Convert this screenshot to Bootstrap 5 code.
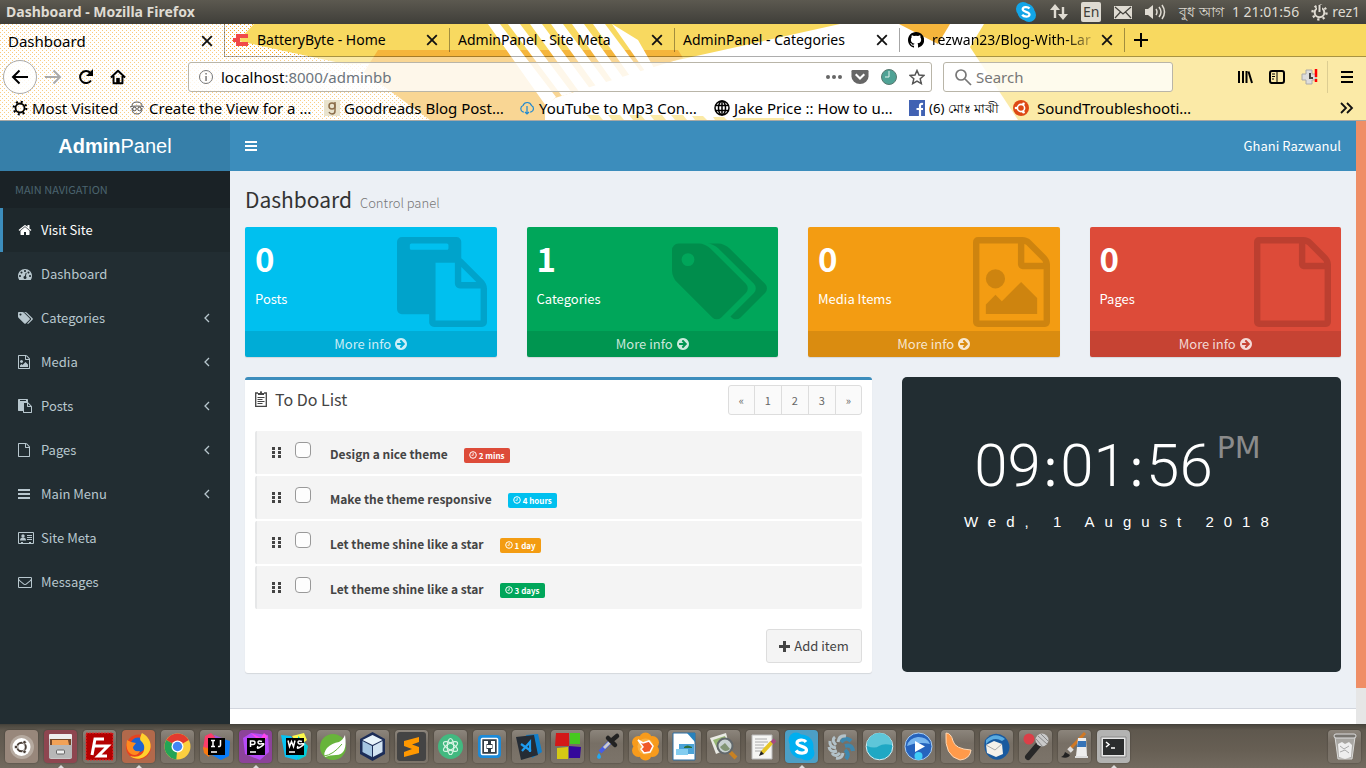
<!DOCTYPE html>
<html lang="en">
<head>
<meta charset="utf-8">
<meta name="viewport" content="width=device-width, initial-scale=1">
<title>Dashboard</title>
<link href="https://cdn.jsdelivr.net/npm/bootstrap@5.3.0/dist/css/bootstrap.min.css" rel="stylesheet">
<style>
:root{--ui:"Noto Sans","Open Sans",sans-serif;--page:"Noto Sans CJK SC","Noto Sans",sans-serif}
body{min-height:100vh;font-family:var(--ui);font-size:14px;line-height:20px;color:#000;background:#fff}
a{color:inherit;text-decoration:none}
button{font:inherit;color:inherit;background:none;border:0;padding:0}
svg{display:block;flex:none}
.ic{width:14px;height:14px;fill:currentColor}
.ic-12{width:12px}.ic-15{width:15px}.ic-16{width:16px}
.ic-grip{width:10px;height:11px}
/* desktop top panel */
.panel{height:24px;background:linear-gradient(#5c5950,#3f3e39);color:#dfdbd2;padding:0 6px}
.panel-title{font-weight:700;font-size:14px}
.tray{gap:13px}
.lang{background:#dfdbd2;color:#3f3e39;border-radius:2px;width:20px;height:20px;text-align:center;line-height:20px}
/* browser chrome */
.chrome{position:relative;height:97px;background:#fff;border-bottom:1px solid #a8a8a4}
.chrome-art{position:absolute;left:0;top:0;width:100%;height:100%}
.chrome-in{position:relative}
.tabs-row{height:33px}
.tab-item{flex:0 1 225px;min-width:0;height:33px;padding:0 11px 0 0;border-bottom:1px solid rgba(0,0,0,.32)}
.tab-item+.tab-item:not(.tab-second)::before{content:"";width:1px;height:24px;background:rgba(0,0,0,.35);flex:none}
.tab-second{border-left:1px solid rgba(0,0,0,.35)}
.tab-active{background:rgba(255,255,255,.4);border-bottom:0;flex-basis:224px;font-size:15px}
.tab-fade{-webkit-mask-image:linear-gradient(90deg,#000 84%,rgba(0,0,0,.25));mask-image:linear-gradient(90deg,#000 84%,rgba(0,0,0,.25))}
.tab-fill{border-bottom:1px solid rgba(0,0,0,.32)}
.tab-fill::before{content:"";width:1px;height:24px;background:rgba(0,0,0,.35)}
.tool-row{height:39px;background:rgba(255,255,255,.45);display:grid;grid-template-columns:188px minmax(0,1fr) 230px 193px;align-items:center}
.book-row{height:24px;background:rgba(255,255,255,.45);font-size:15px}
.nav-area{padding-left:3px}
.back-btn{width:34px;height:34px;border:1px solid #aaa;border-radius:50%;background:rgba(255,255,255,.85);display:grid;place-items:center}
.field-box{height:30px;border:1px solid #b9b5a8;border-radius:3px;background:rgba(255,255,255,.8);padding:0 6px}
.field-box input{border:0;background:none;outline:0;min-width:0;padding:0;flex:1;font-size:15px;color:#777}
.field-box input::placeholder{color:#777;opacity:1}
.url-box{margin-right:11px;font-size:15px}
.url-text{flex:1;min-width:0}
.tool-right{padding-right:12px}
.tool-rule{width:1px;height:32px;background:rgba(0,0,0,.12)}
.bm{flex:0 1 195px;white-space:nowrap}
.bm-first{flex-basis:125px}.bm-short{flex-basis:104px}
/* admin page */
.admin{font-family:var(--page);font-size:12px;flex:1 0 auto;background:#ecf0f5;color:#333}
.side{flex:0 0 230px;background:#222d32;color:#b8c7ce;font-size:13px}
.brand{height:50px;background:#367fa9;color:#fff;font:20px/50px "Liberation Sans",Arial,sans-serif;text-align:center;display:block}
.side-head{height:37px;line-height:37px;padding-left:15px;background:#1a2226;color:#4b646f;font-size:11px}
.side-link{height:44px;padding:0 20px 0 15px;border-left:3px solid transparent}
.side-link .ico-slot{width:23px}
.side-link.current{color:#fff;background:#1e282c;border-left-color:#3c8dbc}
.topnav{height:50px;background:#3c8dbc;color:#fff;padding:0 15px;font-size:13px}
.page-body{padding:14px 15px 35px}
.page-head{height:42px}
.page-head h1{font-size:21px;line-height:28px;font-weight:400;margin:0;color:#333}
.page-head small{font-size:13px;font-weight:300;color:#777}
.grid-row{--bs-gutter-x:30px}
.stat{position:relative;border-radius:2px;color:#fff;height:130px;box-shadow:0 1px 1px rgba(0,0,0,.1);margin-bottom:20px;overflow:hidden}
.stat-num{font-size:33px;line-height:42px;font-weight:700;padding:10px 10px 0}
.stat-name{font-size:13px;line-height:20px;padding:10px 10px 0}
.stat-pic{position:absolute;right:10px;top:10px;height:90px;fill:rgba(0,0,0,.15)}
.stat-more{position:absolute;left:0;right:0;bottom:0;height:26px;background:rgba(0,0,0,.1);color:rgba(255,255,255,.8);font-size:13px}
.bg-aqua{background:#00c0ef}.bg-leaf{background:#00a65a}.bg-amber{background:#f39c12}.bg-brick{background:#dd4b39}
.todo{background:#fff;border-top:3px solid #3c8dbc;border-radius:3px;box-shadow:0 1px 1px rgba(0,0,0,.1);padding:5px 10px 10px;color:#444}
.todo-head h2{font-size:16px;line-height:28px;font-weight:400;margin:0 0 2px;color:#444}
.todo .pagination{--bs-pagination-border-radius:3px}
.todo .page-link{width:28px;height:30px;padding:0;font-size:11px;line-height:28px;text-align:center;color:#666;background:#fafafa;border-color:#ddd}
.todo .page-item:first-child .page-link,.todo .page-item:last-child .page-link{width:27px}
.todo-list{margin:16px 0 20px;display:grid;gap:2px}
.todo-list li{height:43px;background:#f4f4f4;border-left:2px solid #e6e7e8;border-radius:2px;padding:0 10px 0 15px;color:#444}
.todo-list .form-check-input{width:16px;height:16px;margin:-6px 0 0 13px;border:1px solid #999;border-radius:4px;background:#fdfdfd;flex:none}
.todo-list label{font-weight:700;margin:2px 0 0 19px}
.due{font-size:8px;line-height:15px;height:15px;font-weight:700;color:#fff;border-radius:2px;padding:0 5px;margin:5px 0 0 16px;gap:2px}
.add-btn{height:34px;padding:0 12px;background:#f4f4f4;border:1px solid #ddd;border-radius:3px;color:#444;font-size:13px}
.clock{height:295px;border-radius:5px;background:#222d32;color:#fff;padding-top:53px;text-align:center}
.clock-time{font:300 60px/72px Roboto,"Liberation Sans",sans-serif;padding-right:8px}
.clock-time b{font:400 50px/60px "Noto Sans",sans-serif;margin:0 3px}
.clock-time span{font:30px/36px "DejaVu Sans",sans-serif;color:#8b8b8b;margin-left:4px;align-self:flex-start}
.clock-date{font:15px/20px "Liberation Sans",Arial,sans-serif;letter-spacing:10px;margin-top:10px}
.foot{height:16px;background:#fff;border-top:1px solid #d2d6de}
.scroll{flex:0 0 10px;background:#e6e6e6}
.scroll i{display:block;height:94%;background:#ef8e66}
/* launcher */
.dock{height:44px;padding:0 5px;background:linear-gradient(#4a463e,#5f584e 12%,#675f54 60%,#726a5f);gap:6px;border-top:1px solid #45423b}
.dock button{position:relative;width:33px;height:33px;border-radius:4px;background:linear-gradient(#8c857c,#776f65 40%,#7c746a);box-shadow:0 0 1px 1px rgba(0,0,0,.12);display:grid;place-items:center}
.dock svg{width:29px;height:29px}
.dock .on::after{content:"";position:absolute;bottom:-5px;left:14px;border:3px solid transparent;border-top:0;border-bottom-color:#ddd}
.dock .dk-r{background:#8e4650}.dock .dk-o{background:#b2694b}.dock .dk-p{background:#8c4399}.dock .dk-b{background:#4c9fc6}.dock .dk-g{background:#b3b3b2}.dock .dk-u{background:#98877b}
</style>
</head>
<body class="d-flex flex-column">
<svg width="0" height="0" class="position-absolute" aria-hidden="true"><defs>
<symbol id="home" viewBox="0 0 1792 1792"><path d="M1472 992v480q0 26-19 45t-45 19h-384v-384h-256v384h-384q-26 0-45-19t-19-45v-480q0-1 .5-3t.5-3l575-474 575 474q1 2 1 6zm223-69l-62 74q-8 9-21 11h-3q-13 0-21-7l-692-577-692 577q-12 8-24 7-13-2-21-11l-62-74q-8-10-7-23.5t11-21.5l719-599q32-26 76-26t76 26l244 204v-195q0-14 9-23t23-9h192q14 0 23 9t9 23v408l219 182q10 8 11 21.5t-7 23.5z"/></symbol>
<symbol id="dash" viewBox="0 0 1792 1792"><path d="M384 1152q0-53-37.5-90.5t-90.5-37.5-90.5 37.5-37.5 90.5 37.5 90.5 90.5 37.5 90.5-37.5 37.5-90.5zm192-448q0-53-37.5-90.5t-90.5-37.5-90.5 37.5-37.5 90.5 37.5 90.5 90.5 37.5 90.5-37.5 37.5-90.5zm428 481l101-382q6-26-7.5-48.5t-38.5-29.5-48 6.500-30 39.500l-101 382q-60 5-107 43.500t-63 98.500q-20 77 20 146t117 89 146-20 89-117q16-60-6-117t-72-91zm660-33q0-53-37.5-90.5t-90.5-37.5-90.5 37.5-37.5 90.5 37.5 90.5 90.5 37.5 90.5-37.5 37.5-90.5zm-640-640q0-53-37.5-90.5t-90.5-37.5-90.5 37.5-37.5 90.5 37.5 90.5 90.5 37.5 90.5-37.5 37.5-90.5zm448 192q0-53-37.5-90.5t-90.5-37.5-90.5 37.5-37.5 90.5 37.5 90.5 90.5 37.5 90.5-37.5 37.5-90.5zm320 448q0 261-141 483-19 29-54 29h-1402q-35 0-54-29-141-221-141-483 0-182 71-348t191-286 286-191 348-71 348 71 286 191 191 286 71 348z"/></symbol>
<symbol id="tags" viewBox="0 0 1920 1792"><path d="M448 448q0-53-37.5-90.5t-90.5-37.5-90.5 37.5-37.5 90.5 37.5 90.5 90.5 37.5 90.5-37.5 37.5-90.5zm1067 576q0 53-37 90l-491 492q-39 37-91 37-53 0-90-37l-715-716q-38-37-64.5-101t-26.5-117v-416q0-52 38-90t90-38h416q53 0 117 26.5t102 64.5l715 714q37 39 37 91zm384 0q0 53-37 90l-491 492q-39 37-91 37-36 0-59-14t-53-45l470-470q37-37 37-90 0-52-37-91l-715-714q-38-38-102-64.5t-117-26.5h224q53 0 117 26.5t102 64.5l715 714q37 39 37 91z"/></symbol>
<symbol id="file" viewBox="128 0 1536 1792"><path d="M1596 380q28 28 48 76t20 88v1152q0 40-28 68t-68 28h-1344q-40 0-68-28t-28-68v-1600q0-40 28-68t68-28h896q40 0 88 20t76 48zm-444-244v376h376q-10-29-22-41l-313-313q-12-12-41-22zm384 1528v-1024h-416q-40 0-68-28t-28-68v-416h-768v1536h1280z"/></symbol>
<symbol id="image" viewBox="128 0 1536 1792"><path d="M1596 380q28 28 48 76t20 88v1152q0 40-28 68t-68 28h-1344q-40 0-68-28t-28-68v-1600q0-40 28-68t68-28h896q40 0 88 20t76 48zm-444-244v376h376q-10-29-22-41l-313-313q-12-12-41-22zm384 1528v-1024h-416q-40 0-68-28t-28-68v-416h-768v1536h1280zm-128-448v320h-1024v-192l192-192 128 128 384-384zm-832-192q-80 0-136-56t-56-136 56-136 136-56 136 56 56 136-56 136-136 56z"/></symbol>
<symbol id="paste" viewBox="0 0 1792 1792"><path d="M768 1664h896v-640h-416q-40 0-68-28t-28-68v-416h-384v1152zm256-1440v-64q0-13-9.5-22.5t-22.5-9.5h-704q-13 0-22.5 9.5t-9.5 22.5v64q0 13 9.5 22.5t22.5 9.5h704q13 0 22.5-9.5t9.5-22.5zm256 672h299l-299-299v299zm512 128v672q0 40-28 68t-68 28h-960q-40 0-68-28t-28-68v-160h-544q-40 0-68-28t-28-68v-1344q0-40 28-68t68-28h1088q40 0 68 28t28 68v328q21 13 36 28l408 408q28 28 48 76t20 88z"/></symbol>
<symbol id="bars" viewBox="0 0 12 12"><path d="M0 1h12v2H0zM0 5h12v2H0zM0 9h12v2H0z"/></symbol>
<symbol id="idcard" viewBox="0 0 16 12"><path fill-rule="evenodd" d="M1 0h14q1 0 1 1v10q0 1-1 1H1q-1 0-1-1V1q0-1 1-1zM1 1v10h2v-1h2v1h6v-1h2v1h2V1z"/><circle cx="5" cy="4" r="1.7"/><path d="M2 8.600q0-3.200 3-3.200t3 3.200zM9 3h5v1H9zM9 5h5v1H9zM9 7h5v1H9z"/></symbol>
<symbol id="mail" viewBox="0 0 1792 1792"><path d="M1664 1504v-768q-32 36-69 66-268 206-426 338-51 43-83 67t-86.500 48.500-102.500 24.500h-2q-48 0-102.500-24.500t-86.500-48.500-83-67q-158-132-426-338-37-30-69-66v768q0 13 9.500 22.500t22.500 9.500h1472q13 0 22.500-9.500t9.500-22.500zm0-1051v-24.500l-.5-13-3-12.500-5.500-9-9-7.500-14-2.500h-1472q-13 0-22.500 9.500t-9.500 22.500q0 168 147 284 193 152 401 317 6 5 35 29.500t46 37.500 44.500 31.500 50.500 27.500 43 9h2q20 0 43-9t50.500-27.500 44.500-31.500 46-37.500 35-29.500q208-165 401-317 54-43 100.500-115.500t46.500-131.500zm128-37v1088q0 66-47 113t-113 47h-1472q-66 0-113-47t-47-113v-1088q0-66 47-113t113-47h1472q66 0 113 47t47 113z"/></symbol>
<symbol id="go" viewBox="128 128 1536 1536"><path d="M1413 896q0-27-18-45l-91-91-362-362q-18-18-45-18t-45 18l-91 91q-18 18-18 45t18 45l189 189h-502q-26 0-45 19t-19 45v128q0 26 19 45t45 19h502l-189 189q-19 19-19 45t19 45l91 91q18 18 45 18t45-18l362-362 91-91q18-18 18-45zm251 0q0 209-103 385.500t-279.500 279.500-385.500 103-385.500-103-279.500-279.500-103-385.500 103-385.500 279.500-279.500 385.500-103 385.500 103 279.500 279.500 103 385.500z"/></symbol>
<symbol id="left" viewBox="0 0 6 10"><path d="M5 1L1 5l4 4" fill="none" stroke="currentColor" stroke-width="1.300"/></symbol>
<symbol id="grip" viewBox="0 0 10 11"><path d="M0 0h3v3H0zM6 0h3v3H6zM0 4h3v3H0zM6 4h3v3H6zM0 8h3v3H0zM6 8h3v3H6z"/></symbol>
<symbol id="time" viewBox="0 0 8 8"><circle cx="4" cy="4" r="3.300" fill="none" stroke="currentColor"/><path d="M4.200 2v2.300H2.500" fill="none" stroke="currentColor" stroke-width=".8"/></symbol>
<symbol id="x" viewBox="0 0 10 10"><path d="M1 1l8 8M9 1L1 9" stroke="#111" stroke-width="1.500"/></symbol>
</defs></svg>

<header class="panel d-flex align-items-center">
  <span class="panel-title me-auto">Dashboard - Mozilla Firefox</span>
  <div class="tray d-flex align-items-center">
    <svg width="22" height="22" viewBox="0 0 22 22"><circle cx="8" cy="8" r="7" fill="#12a5e8"/><circle cx="14" cy="14" r="7" fill="#12a5e8"/><circle cx="11" cy="11" r="8.500" fill="#12a5e8"/><path d="M14.500 7.500C13 5.500 7.700 5.500 7.700 8.300S14.500 10.500 14.500 13.500 8.800 16 7.200 13.800" fill="none" stroke="#fff" stroke-width="2.300"/></svg>
    <svg width="18" height="18" viewBox="0 0 18 18" fill="#dfdbd2"><path d="M5 1l5 6H6.200v8H3.800V7H0zM13 17l-5-6h3.800V4h2.400v7H18z"/></svg>
    <span class="lang">En</span>
    <svg width="18" height="13" viewBox="0 0 18 13"><path fill="#dfdbd2" d="M0 0h18v13H0z"/><path d="M1 1l8 7 8-7M1 12l5.500-6M17 12l-5.500-6" fill="none" stroke="#44423c" stroke-width="1.200"/></svg>
    <svg width="21" height="16" viewBox="0 0 21 16"><path fill="#dfdbd2" d="M0 5h3l5-4v14l-5-4H0z"/><path d="M11 5q2 3 0 6M14 3q4 5 0 10M17 1q5 7 0 14" fill="none" stroke="#dfdbd2" stroke-width="1.500"/></svg>
    <div class="d-flex align-items-center">
      <span class="me-2" lang="bn">বুধ আগ</span><span class="me-2">1 21:01:56</span>
      <svg class="mx-1" width="17" height="17" viewBox="0 0 17 17"><circle cx="8.500" cy="8.500" r="4.800" fill="none" stroke="#dfdbd2" stroke-width="2"/><circle cx="8.500" cy="8.500" r="7" fill="none" stroke="#dfdbd2" stroke-width="2.400" stroke-dasharray="2.200 3.298"/><path d="M8.500 1v7" stroke="#45433d" stroke-width="5"/><path d="M8.500 1v7" stroke="#dfdbd2" stroke-width="2"/></svg>
      <span>rez1</span>
    </div>
  </div>
</header>

<section class="chrome">
  <svg class="chrome-art" viewBox="0 24 1366 96" preserveAspectRatio="none" aria-hidden="true">
    <defs><pattern id="dots" width="4" height="4" patternUnits="userSpaceOnUse"><path d="M0 0h1v1H0zM2 2h1v1H2z" fill="#f5a623"/></pattern></defs>
    <path fill="#fff" d="M0 24h1366v96H0z"/>
    <path fill="url(#dots)" d="M0 24h260L250 42l130 26 50 52H0z"/>
    <path fill="#f8d960" d="M254 24h586L660 64H345L238 41z"/>
    <path fill="#f5b53c" d="M378 50h300l5 8-13 4-115 36-10 8v14H430L364 72z"/>
    <path fill="#fff" d="M488 24h12l56 73-10 9zM508 24h12l52 69-10 3zM530 24h12l49 66-11 3zM551 24h12l46 62-11 3zM572 24h12l43 59-11 3zM593 24h12l42 56-12 3zM612 24l26 16 16 28-9 3zM646 70l30-9 5 3-110 34z"/>
    <g fill="#f8d960"><path d="M587 115h12l4 5h-12zM608 115h12l4 5h-12zM629 115h12l4 5h-12zM650 115h12l4 5h-12zM671 115h12l4 5h-12zM692 116h11l4 4h-12zM713 117h11l3 3h-12zM734 118h50v2h-49z"/></g>
    <path fill="#f5b53c" d="M899 24h51l-12 20z"/>
    <path fill="#f8d960" d="M984 24h382v96h-348l-48-73z"/>
  </svg>
  <div class="chrome-in">
    <nav class="tabs-row d-flex">
      <div class="tab-item tab-active d-flex align-items-center"><span class="ms-2 me-auto">Dashboard</span><button aria-label="Close"><svg width="12" height="12"><use href="#x"/></svg></button></div>
      <div class="tab-item tab-second d-flex align-items-center"><svg class="ms-2 me-2" width="16" height="14" viewBox="0 0 16 14"><path fill="#f04a4a" d="M3 1h12v4H7v4h8v4H3v-4H0V5h3z"/></svg><span class="me-auto">BatteryByte - Home</span><button aria-label="Close"><svg width="12" height="12"><use href="#x"/></svg></button></div>
      <div class="tab-item d-flex align-items-center"><span class="ms-2 me-auto">AdminPanel - Site Meta</span><button aria-label="Close"><svg width="12" height="12"><use href="#x"/></svg></button></div>
      <div class="tab-item d-flex align-items-center"><span class="ms-2 me-auto">AdminPanel - Categories</span><button aria-label="Close"><svg width="12" height="12"><use href="#x"/></svg></button></div>
      <div class="tab-item d-flex align-items-center"><svg class="ms-2" width="16" height="16" viewBox="0 0 16 16"><path d="M8 0C3.580 0 0 3.580 0 8c0 3.540 2.290 6.530 5.470 7.590.4.070.55-.17.55-.38v-1.500c-2.200.5-2.700-.9-2.700-.9-.4-.9-.9-1.200-.9-1.200-.7-.5.1-.5.1-.5.8.1 1.200.8 1.200.8.7 1.200 1.900.9 2.300.7.1-.5.3-.9.5-1.100-1.800-.2-3.600-.9-3.600-4 0-.9.300-1.600.8-2.200-.1-.2-.4-1 .1-2.100 0 0 .7-.2 2.200.8a7.600 7.600 0 014 0c1.500-1 2.200-.8 2.200-.8.4 1.100.2 1.900.1 2.100.5.6.8 1.300.8 2.200 0 3.100-1.900 3.700-3.700 4 .3.300.6.700.6 1.500v2.200c0 .2.100.5.600.4A8 8 0 008 0z"/></svg><span class="tab-fade ms-1 ps-1 me-auto text-nowrap">rezwan23/Blog-With-Lar</span><button aria-label="Close"><svg width="12" height="12"><use href="#x"/></svg></button></div>
      <div class="tab-fill flex-fill d-flex align-items-center"><button class="ms-2" aria-label="New tab"><svg width="16" height="16"><path d="M8 1v14M1 8h14" stroke="#000" stroke-width="2"/></svg></button></div>
    </nav>
    <div class="tool-row">
      <div class="nav-area d-flex align-items-center">
        <button class="back-btn" aria-label="Back"><svg width="18" height="16"><path d="M17 8H2M8.500 1.500L2 8l6.500 6.500" fill="none" stroke="#000" stroke-width="2"/></svg></button>
        <button class="ms-2" aria-label="Forward"><svg width="17" height="16"><path d="M0 8h15M8.500 1.500L15 8l-6.500 6.500" fill="none" stroke="#aaa" stroke-width="2"/></svg></button>
        <button class="ms-3" aria-label="Reload"><svg width="16" height="16"><path d="M13 11.500A6 6 0 1 1 12.500 4" fill="none" stroke="#000" stroke-width="2"/><path d="M15 0v7H8z"/></svg></button>
        <button class="ms-3" aria-label="Home"><svg width="16" height="16" viewBox="0 0 18 16"><path fill="none" stroke="#000" stroke-width="2.200" stroke-linejoin="round" d="M1 8.500L9 1l8 7.500M4 7v8h10V7"/><path d="M7 15V9h4v6z"/></svg></button>
      </div>
      <div class="field-box url-box d-flex align-items-center">
        <svg class="ms-1" width="14" height="14" viewBox="1 1 14 14"><circle cx="8" cy="8" r="6.500" fill="none" stroke="#777"/><path d="M7.300 7h1.500v5H7.300zM7.300 4h1.500v1.500H7.300z" fill="#777"/></svg>
        <div class="url-text ms-2 text-secondary"><a href="#"><span class="text-black">localhost</span>:8000/adminbb</a></div>
        <svg width="18" height="16" fill="#666"><circle cx="3" cy="8" r="2"/><circle cx="9" cy="8" r="2"/><circle cx="15" cy="8" r="2"/></svg>
        <svg class="ms-2 me-2" width="18" height="16" viewBox="0 0 16 15"><path fill="#666" d="M1 1h14q1 0 1 1v5a8 7 0 0 1-16 0V2q0-1 1-1z"/><path d="M4 5l4 4 4-4" fill="none" stroke="#fff" stroke-width="2"/></svg>
        <svg class="mx-1" width="16" height="16"><circle cx="8" cy="8" r="7.500" fill="#4fa295" stroke="#58786f"/><path d="M8 2v6H4" fill="none" stroke="#e6f3ee"/></svg>
        <svg class="ms-2" width="16" height="16"><path d="M8 1.500l2 4.500 5 .5-3.800 3.300 1.100 4.800L8 12.100l-4.300 2.500 1.100-4.800L1 6.500 6 6z" fill="none" stroke="#555" stroke-width="1.500"/></svg>
      </div>
      <div class="field-box d-flex align-items-center">
        <svg class="ms-1" width="18" height="18"><circle cx="7" cy="7" r="5" fill="none" stroke="#777" stroke-width="1.700"/><path d="M11 11l6 6" stroke="#777" stroke-width="1.700"/></svg>
        <input class="ms-1" type="search" aria-label="Search" placeholder="Search">
      </div>
      <div class="tool-right d-flex align-items-center justify-content-end">
        <button aria-label="Library"><svg width="16" height="16"><path d="M2 2v12M6 2v12M9.500 2v12M11.500 2.500L15 14" stroke="#000" stroke-width="2" fill="none"/></svg></button>
        <button class="ms-3" aria-label="Sidebar"><svg width="16" height="16"><rect x="1" y="2" width="14" height="12" rx="2" fill="none" stroke="#000" stroke-width="2"/><path d="M8 2v12M3 5h3M3 7.500h3M3 10h2" stroke="#000"/></svg></button>
        <button class="ms-3" aria-label="Downloads extension"><svg width="18" height="18"><path d="M5 2h6v4h4v6h-4v4H5v-4H1V6h4z" fill="#ddd" stroke="#aaa"/><path d="M9 5v5h3" fill="none" stroke="#444" stroke-width="2"/><path d="M15 1v8M15 11v3" stroke="#f00" stroke-width="2.500"/></svg></button>
        <span class="tool-rule mx-2"></span>
        <button class="ms-1" aria-label="Menu"><svg width="14" height="14"><path d="M1 2h12M1 7h12M1 12h12" stroke="#000" stroke-width="2"/></svg></button>
      </div>
    </div>
    <nav class="book-row d-flex align-items-center ps-1">
      <a href="#" class="bm bm-first d-flex align-items-center ps-2"><svg class="me-1" width="16" height="16"><circle cx="8" cy="8" r="4.500" fill="none" stroke="#000" stroke-width="1.800"/><circle cx="8" cy="8" r="6.300" fill="none" stroke="#000" stroke-width="2.200" stroke-dasharray="2 2.950"/></svg>Most Visited</a>
      <a href="#" class="bm d-flex align-items-center"><svg class="me-1" width="16" height="16" fill="none" stroke="#555"><path d="M1 7q2-1 7-1t7 1M3 6q0-4 5-4t5 4M3 8q0 6 5 6t5-6"/><circle cx="5.500" cy="9" r="1.800"/><circle cx="10.500" cy="9" r="1.800"/></svg>Create the View for a …</a>
      <a href="#" class="bm d-flex align-items-center"><svg class="me-1" width="16" height="16"><path fill="#e9e3cd" d="M0 0h16v16H0z"/><g fill="none" stroke="#8a6d4b" stroke-width="1.500"><circle cx="8" cy="6" r="3"/><path d="M11 2v9q0 3-3 3-2 0-3-2"/></g></svg>Goodreads Blog Post…</a>
      <a href="#" class="bm d-flex align-items-center"><svg class="me-1" width="16" height="16" fill="none" stroke="#1e88d2" stroke-width="1.200"><path d="M5 12H4a3.500 3.500 0 0 1 0-6.500 4.500 4.500 0 0 1 8.500 0 3.500 3.500 0 0 1-.5 6.500h-1M8 6v8M6 12l2 2 2-2"/></svg>YouTube to Mp3 Con…</a>
      <a href="#" class="bm d-flex align-items-center"><svg class="me-1" width="16" height="16" fill="none" stroke="#000" stroke-width="1.500"><circle cx="8" cy="8" r="7"/><ellipse cx="8" cy="8" rx="3.500" ry="7"/><path d="M1.500 5.500h13M1.500 10.500h13M8 1v14"/></svg>Jake Price :: How to u…</a>
      <a href="#" class="bm bm-short d-flex align-items-center"><svg class="me-1" width="16" height="16"><path fill="#4162b3" d="M0 0h16v16H0z"/><path d="M14 4q-3-.7-3 2v10M7.500 9H14" fill="none" stroke="#fff" stroke-width="2.200"/></svg><small>(6) মোঃ মাঝী</small></a>
      <a href="#" class="bm d-flex align-items-center me-auto"><svg class="me-2" width="16" height="16"><circle cx="8" cy="8" r="8" fill="#dd4814"/><circle cx="8" cy="8" r="3.600" fill="none" stroke="#fff" stroke-width="1.600"/><g fill="#fff"><circle cx="3" cy="8" r="1.300"/><circle cx="10.500" cy="3.700" r="1.300"/><circle cx="10.500" cy="12.300" r="1.300"/></g></svg>SoundTroubleshooti…</a>
      <button class="me-2 pe-1" aria-label="More bookmarks"><svg width="14" height="12"><path d="M1 1l5 5-5 5M7 1l5 5-5 5" fill="none" stroke="#111" stroke-width="1.800"/></svg></button>
    </nav>
  </div>
</section>

<div class="admin d-flex">
  <aside class="side">
    <a class="brand" href="#"><b>Admin</b>Panel</a>
    <div class="side-head">MAIN NAVIGATION</div>
    <nav>
      <a href="#" class="side-link current d-flex align-items-center"><span class="ico-slot"><svg class="ic"><use href="#home"/></svg></span>Visit Site</a>
      <a href="#" class="side-link d-flex align-items-center"><span class="ico-slot"><svg class="ic"><use href="#dash"/></svg></span>Dashboard</a>
      <a href="#" class="side-link d-flex align-items-center"><span class="ico-slot"><svg class="ic ic-15"><use href="#tags"/></svg></span><span class="me-auto">Categories</span><svg width="6" height="10"><use href="#left"/></svg></a>
      <a href="#" class="side-link d-flex align-items-center"><span class="ico-slot"><svg class="ic ic-12"><use href="#image"/></svg></span><span class="me-auto">Media</span><svg width="6" height="10"><use href="#left"/></svg></a>
      <a href="#" class="side-link d-flex align-items-center"><span class="ico-slot"><svg class="ic"><use href="#paste"/></svg></span><span class="me-auto">Posts</span><svg width="6" height="10"><use href="#left"/></svg></a>
      <a href="#" class="side-link d-flex align-items-center"><span class="ico-slot"><svg class="ic ic-12"><use href="#file"/></svg></span><span class="me-auto">Pages</span><svg width="6" height="10"><use href="#left"/></svg></a>
      <a href="#" class="side-link d-flex align-items-center"><span class="ico-slot"><svg class="ic ic-12"><use href="#bars"/></svg></span><span class="me-auto">Main Menu</span><svg width="6" height="10"><use href="#left"/></svg></a>
      <a href="#" class="side-link d-flex align-items-center"><span class="ico-slot"><svg class="ic ic-16"><use href="#idcard"/></svg></span>Site Meta</a>
      <a href="#" class="side-link d-flex align-items-center"><span class="ico-slot"><svg class="ic"><use href="#mail"/></svg></span>Messages</a>
    </nav>
  </aside>
  <main class="flex-fill d-flex flex-column">
    <header class="topnav d-flex align-items-center justify-content-between"><button aria-label="Toggle navigation"><svg width="12" height="12" fill="#fff"><use href="#bars"/></svg></button><a href="#">Ghani Razwanul</a></header>
    <div class="page-body flex-fill">
      <div class="page-head d-flex align-items-baseline"><h1>Dashboard</h1><small class="ms-2">Control panel</small></div>
      <div class="row grid-row">
        <div class="col-3"><div class="stat bg-aqua"><div class="stat-num">0</div><div class="stat-name">Posts</div><svg class="stat-pic" width="90"><use href="#paste"/></svg><a href="#" class="stat-more d-flex align-items-center justify-content-center">More info<svg class="ms-1" width="12" height="12" fill="currentColor"><use href="#go"/></svg></a></div></div>
        <div class="col-3"><div class="stat bg-leaf"><div class="stat-num">1</div><div class="stat-name">Categories</div><svg class="stat-pic" width="96"><use href="#tags"/></svg><a href="#" class="stat-more d-flex align-items-center justify-content-center">More info<svg class="ms-1" width="12" height="12" fill="currentColor"><use href="#go"/></svg></a></div></div>
        <div class="col-3"><div class="stat bg-amber"><div class="stat-num">0</div><div class="stat-name">Media Items</div><svg class="stat-pic" width="77"><use href="#image"/></svg><a href="#" class="stat-more d-flex align-items-center justify-content-center">More info<svg class="ms-1" width="12" height="12" fill="currentColor"><use href="#go"/></svg></a></div></div>
        <div class="col-3"><div class="stat bg-brick"><div class="stat-num">0</div><div class="stat-name">Pages</div><svg class="stat-pic" width="77"><use href="#file"/></svg><a href="#" class="stat-more d-flex align-items-center justify-content-center">More info<svg class="ms-1" width="12" height="12" fill="currentColor"><use href="#go"/></svg></a></div></div>
      </div>
      <div class="row grid-row">
        <div class="col-7"><section class="todo">
          <div class="todo-head d-flex align-items-center justify-content-between">
            <h2 class="d-flex align-items-center"><svg class="me-2" width="12" height="16"><path fill="none" stroke="#444" stroke-width="1.300" d="M3 2H.7v13.300h10.600V2H9"/><path fill="#444" d="M3 4V2h2q0-2 1-2t1 2h2v2zM2.500 6h7v1h-7zM2.500 8h5v1h-5zM2.500 10h7v1h-7zM2.500 12h5v1h-5z"/></svg>To Do List</h2>
            <ul class="pagination mb-0"><li class="page-item"><a class="page-link" href="#">«</a></li><li class="page-item"><a class="page-link" href="#">1</a></li><li class="page-item"><a class="page-link" href="#">2</a></li><li class="page-item"><a class="page-link" href="#">3</a></li><li class="page-item"><a class="page-link" href="#">»</a></li></ul>
          </div>
          <ul class="todo-list list-unstyled">
            <li class="d-flex align-items-center"><svg class="ic-grip" fill="#444"><use href="#grip"/></svg><input class="form-check-input" type="checkbox" id="t1"><label for="t1">Design a nice theme</label><span class="due bg-brick d-flex align-items-center"><svg width="8" height="8"><use href="#time"/></svg>2 mins</span></li>
            <li class="d-flex align-items-center"><svg class="ic-grip" fill="#444"><use href="#grip"/></svg><input class="form-check-input" type="checkbox" id="t2"><label for="t2">Make the theme responsive</label><span class="due bg-aqua d-flex align-items-center"><svg width="8" height="8"><use href="#time"/></svg>4 hours</span></li>
            <li class="d-flex align-items-center"><svg class="ic-grip" fill="#444"><use href="#grip"/></svg><input class="form-check-input" type="checkbox" id="t3"><label for="t3">Let theme shine like a star</label><span class="due bg-amber d-flex align-items-center"><svg width="8" height="8"><use href="#time"/></svg>1 day</span></li>
            <li class="d-flex align-items-center"><svg class="ic-grip" fill="#444"><use href="#grip"/></svg><input class="form-check-input" type="checkbox" id="t4"><label for="t4">Let theme shine like a star</label><span class="due bg-leaf d-flex align-items-center"><svg width="8" height="8"><use href="#time"/></svg>3 days</span></li>
          </ul>
          <div class="d-flex justify-content-end"><button class="add-btn d-flex align-items-center"><svg class="me-1" width="11" height="11"><path d="M5.500 0v11M0 5.500h11" stroke="#444" stroke-width="3"/></svg>Add item</button></div>
        </section></div>
        <div class="col-5"><section class="clock">
          <div class="clock-time d-flex justify-content-center align-items-baseline">09<b>:</b>01<b>:</b>56<span>PM</span></div>
          <div class="clock-date">Wed, 1 August 2018</div>
        </section></div>
      </div>
    </div>
    <footer class="foot"></footer>
  </main>
  <div class="scroll"><i></i></div>
</div>

<nav class="dock d-flex align-items-center" aria-label="Launcher">
  <button class="dk-u" aria-label="Dash"><svg viewBox="0 0 29 29"><circle cx="15" cy="15" r="12" fill="#b5a99f"/><circle cx="14.500" cy="15" r="9" fill="#fff"/><circle cx="14.500" cy="15" r="4.300" fill="none" stroke="#4a3f38" stroke-width="2"/><g fill="#4a3f38" stroke="#fff" stroke-width=".7"><circle cx="9" cy="15" r="1.800"/><circle cx="17.500" cy="10.300" r="1.800"/><circle cx="17.500" cy="19.700" r="1.800"/></g></svg></button>
  <button class="dk-r on" aria-label="Files"><svg viewBox="0 0 29 29"><rect x="3" y="3" width="23" height="24" rx="2" fill="#c9c9c9"/><rect x="3" y="2" width="23" height="5" rx="1" fill="#eee"/><path fill="#74482a" d="M4 7h21v6H4z"/><path fill="#f2a257" d="M6 8h16l1 5H6z"/><path fill="#b7b7b7" d="M3 13h23v13H3z"/><rect x="10.500" y="18" width="8" height="4" rx="1" fill="#eee" stroke="#666"/></svg></button>
  <button aria-label="FileZilla"><svg viewBox="0 0 29 29"><path fill="#b40000" stroke="#df3333" stroke-dasharray="2 1" d="M1 1h27v27H1z"/><path d="M7 23l3-16h9M8 14h8M14 14h9L13 24h9" fill="none" stroke="#fff" stroke-width="3"/></svg></button>
  <button class="dk-o on" aria-label="Firefox"><svg viewBox="0 0 29 29"><circle cx="14.500" cy="15" r="12.500" fill="#e8431e"/><circle cx="14" cy="13" r="7.500" fill="#1d63d1"/><path fill="#ffd02e" d="M18 1c8 4 11 13 7 19-4 7-13 9-19 4 8 2 13-1 14-6s-1-7-3-9 0-6 1-8z"/><path fill="#ff8a1f" d="M3 8l4 2 5 1-3 4q0 5 7 4-3 6-9 3Q1 18 3 8z"/></svg></button>
  <button aria-label="Chrome"><svg viewBox="0 0 29 29"><circle cx="14.500" cy="14.500" r="13" fill="#fccf3f"/><path fill="#e33b2e" d="M14.500 14.500L3.300 8a13 13 0 0 1 22.500 0z"/><path fill="#23a455" d="M14.500 14.500L3.300 8a13 13 0 0 0 10 19.400z"/><circle cx="14.500" cy="14.500" r="6" fill="#fff"/><circle cx="14.500" cy="14.500" r="4.700" fill="#4285f4"/></svg></button>
  <button aria-label="IntelliJ IDEA"><svg viewBox="0 0 29 29"><path fill="#fc3d6a" d="M3 4l6-3 5 5-5 16-8-5z"/><path fill="#f97a12" d="M1 15l8 2-2 8-5-4z"/><path fill="#087cfa" d="M14 5l14 4-1 15-8 4-9-5z"/><path fill="#9d58e0" d="M12 3l8 3-4 8z"/><path d="M6 6h17v17H6z"/><path d="M9 8.500h4M11 8.500v6M9 14.500h4M18.500 8v5q0 2-2.500 1.500M9 20h6" fill="none" stroke="#fff" stroke-width="1.500"/></svg></button>
  <button class="dk-p on" aria-label="PhpStorm"><svg viewBox="0 0 29 29"><path fill="#b74af7" d="M2 6l8-5 17 2 1 17-9 8-15-6z"/><path fill="#ff45ed" d="M10 1l10 5 3-5 4 4-7 6z"/><path d="M6 6h18v17H6z"/><path d="M9.500 15V9H12q2 0 2 1.700T12 12.500H9.500M21 9.500q-4-1.500-4 .7t4 1.600-1 2.900-3-.7M9 20h6" fill="none" stroke="#fff" stroke-width="1.500"/></svg></button>
  <button aria-label="WebStorm"><svg viewBox="0 0 29 29"><path fill="#07c3f2" d="M1 3l10 1 10 18-4 6-12-3z"/><path fill="#fcf84a" d="M12 4l12-3 3 7-8 6z"/><path fill="#00cdd7" d="M18 4l10 10-2 10-8 4z"/><path d="M6 6h18v17H6z"/><path d="M8 8.500l1.500 6 2-5 2 5 1.500-6M22 9.500q-4-1.500-4 .7t4 1.600-1 2.900-3-.7M9 20h6" fill="none" stroke="#fff" stroke-width="1.500"/></svg></button>
  <button aria-label="Spring"><svg viewBox="0 0 29 29"><circle cx="14" cy="15" r="13" fill="#68b43b"/><path fill="#fff" d="M26 3q3 20-9 20-6 0-11 2-2-4 2-9 5-5 12-6 4-2 6-7z"/><path d="M5 24q9-1 18-12" fill="none" stroke="#68b43b"/></svg></button>
  <button aria-label="NetBeans"><svg viewBox="0 0 29 29"><path fill="#1c2d58" d="M14.500 0L27 7v15l-12.500 7L2 22V7z"/><path fill="#e8f4fb" d="M14.500 3l10 5-10 5-10-5z"/><path fill="#a5c6e2" d="M4.500 9l9.500 5v11l-9.500-5z"/><path fill="#d2e4f3" d="M24.500 9L15 14v11l9.500-5z"/></svg></button>
  <button aria-label="Sublime Text"><svg viewBox="0 0 29 29"><rect width="29" height="29" rx="3" fill="#444"/><path fill="#ff9800" d="M22 5v5l-7 2.500 7 2.500v6L7 25v-5l8-3-8-3V9z"/></svg></button>
  <button aria-label="Atom"><svg viewBox="0 0 29 29"><circle cx="14.500" cy="14.500" r="12.500" fill="#42b980"/><g fill="none" stroke="#d6f3e3" stroke-width="1.200"><ellipse cx="14.500" cy="14.500" rx="3.200" ry="8"/><ellipse cx="14.500" cy="14.500" rx="3.200" ry="8" transform="rotate(60 14.500 14.500)"/><ellipse cx="14.500" cy="14.500" rx="3.200" ry="8" transform="rotate(120 14.500 14.500)"/></g></svg></button>
  <button aria-label="Brackets"><svg viewBox="0 0 29 29"><rect x="3" y="3" width="23" height="23" rx="4" fill="#1c8ad8"/><rect x="6.500" y="6.500" width="16" height="16" rx="1" fill="#333c44" stroke="#fff" stroke-width="1.600"/><path fill="#fff" d="M9 9h4v3h-1.500v5H13v3H9zM20 9h-4v3h1.500v5H16v3h4zM12 13h5v3h-5z"/></svg></button>
  <button aria-label="VS Code"><svg viewBox="0 0 29 29"><path fill="#0f7fcc" d="M12 3l12-1 4 18-10 6z"/><path fill="#252c35" d="M2 5l18-2 4 20-17 5z"/><path d="M7 12l10 7M8 19l8-9v10" fill="none" stroke="#1e9cf0" stroke-width="2.200"/></svg></button>
  <button aria-label="Puzzle"><svg viewBox="0 0 29 29"><path fill="#d31818" d="M3 1h13v13H2z"/><path fill="#46c91f" d="M17 1h10v11H17z"/><path fill="#d5c914" d="M4 16l11-1v12H4z"/><path fill="#34089b" d="M16 14l12 1-1 11H16z"/></svg></button>
  <button aria-label="Colour picker"><svg viewBox="0 0 29 29"><path d="M8 20L19 9" stroke="#465de6" stroke-width="4"/><path d="M12 16l7-7" stroke="#ccc" stroke-width="3"/><path d="M16 6l7 7M19 9l6-5" stroke="#222" stroke-width="4.500" stroke-linecap="round"/><path fill="#22a9f2" d="M7 21q-4 5 0 6 4-1 0-6z"/></svg></button>
  <button aria-label="Gesture app"><svg viewBox="0 0 29 29"><g fill="#f89b1c"><circle cx="14.500" cy="14.500" r="11"/><circle cx="14.500" cy="7" r="6.500"/><circle cx="14.500" cy="22" r="6.500"/><circle cx="7.500" cy="10.500" r="6.500"/><circle cx="21.500" cy="10.500" r="6.500"/><circle cx="7.500" cy="18.500" r="6.500"/><circle cx="21.500" cy="18.500" r="6.500"/></g><circle cx="14.500" cy="14.500" r="8" fill="#fbb040"/><path d="M7 8l5 3 6-2 4 5-3 6-6 1-3-4 2-2z" fill="#f05a28" stroke="#fff" stroke-width="1.500"/></svg></button>
  <button aria-label="LibreOffice Draw"><svg viewBox="0 0 29 29"><path fill="#fff" stroke="#2a6fa5" d="M3 1h22v27H3z"/><path fill="#2882bd" d="M17 1h8v9z"/><path fill="#4aa3d8" d="M9 12h15v10H9z"/><path fill="#2f6f3a" d="M14 15q3-3 8 0v1h-8z"/><path fill="#83cdf0" d="M6 17h12v6H6z"/></svg></button>
  <button aria-label="Image viewer"><svg viewBox="0 0 29 29"><path fill="#e9eae4" d="M1 6l16-5 4 15-14 6z"/><path fill="#96b672" d="M4 8l12-4 3 10-10 4z"/><path d="M20 19l7 7" stroke="#c88122" stroke-width="4"/><circle cx="16" cy="14" r="7.500" fill="#c9d3d2" stroke="#62686b" stroke-width="2"/><path fill="#829675" d="M11 15l5-4 5 6q-5 5-10-2z"/></svg></button>
  <button aria-label="Text editor"><svg viewBox="0 0 29 29"><path fill="#f5f5f3" stroke="#bbb" d="M4 3h20v24H4z"/><path d="M7 7h12M7 10h13M7 13h9M7 16h11M7 19h7" stroke="#aaa"/><path d="M14 21L24 10" stroke="#e6c525" stroke-width="4"/><path d="M24 11l3-3" stroke="#a34b80" stroke-width="4"/><path fill="#222" d="M11 24l2-5 3 3z"/></svg></button>
  <button class="dk-b on" aria-label="Skype"><svg viewBox="0 0 29 29"><g fill="#00aff0"><circle cx="9" cy="8" r="7.500"/><circle cx="20" cy="21" r="7.500"/><circle cx="14.500" cy="14.500" r="12"/></g><path d="M19 10C17 7 10 7.500 10 11s9.500 3 9.500 7-8 4-10.500.5" fill="none" stroke="#fff" stroke-width="3.200"/></svg></button>
  <button aria-label="Shutter"><svg viewBox="0 0 29 29"><g fill="none" stroke="#3e88ae" stroke-width="4"><path d="M15 10q5-6 10-1M19 14q7-2 8 5M19 18q5 4 1 9"/></g><g fill="none" stroke="#b3c2c9" stroke-width="3"><path d="M12 10Q13 3 20 4M10 13Q5 8 9 5M10 16Q3 15 4 9M11 19Q4 21 3 15M14 21Q9 26 6 21M17 21q-1 6-7 5"/></g></svg></button>
  <button aria-label="Teal app"><svg viewBox="0 0 29 29"><circle cx="14.500" cy="14.500" r="13.300" fill="#1fa8c4" stroke="#d8eef3"/><path fill="#5ec6d9" d="M2 14a12.500 12.500 0 0 1 25-1q-9-2-13 1t-12 0z"/></svg></button>
  <button aria-label="Media player"><svg viewBox="0 0 29 29"><circle cx="14.500" cy="14.500" r="13.500" fill="#2663bd" stroke="#a9cdf2"/><path fill="#78b5ee" d="M3 14a12 11 0 0 1 23-2q-12-3-23 2z"/><circle cx="14.500" cy="24" r="4" fill="#42cdf7"/><path fill="#fff" d="M11 9l10 5.500-10 5.500z"/></svg></button>
  <button aria-label="Clementine"><svg viewBox="0 0 29 29"><path fill="#ff9a4a" stroke="#ffd8b4" d="M3 1q5 0 7 8t18 9q-1 9-11 10Q1 24 3 1z"/></svg></button>
  <button aria-label="Thunderbird"><svg viewBox="0 0 29 29"><path fill="#195a9f" d="M3 8Q12-3 23 5q7 8 3 16-6 9-15 6Q0 22 3 8z"/><path fill="#5aabe0" d="M4 8q9-9 19-1l-3 2q-8-5-16 3z"/><path fill="#f4f1ea" d="M4 13l8-4 8 3 1 10-7 3-9-4z"/><path d="M4 13l9 5 7-6" fill="none" stroke="#aaa"/></svg></button>
  <button aria-label="Voice recorder"><svg viewBox="0 0 29 29"><path d="M7 25L18 12" stroke="#282828" stroke-width="6" stroke-linecap="round"/><circle cx="21" cy="8" r="6.500" fill="#c9c9c9"/><path d="M15 7l7 8M17 4l9 8M20 2l7 7" stroke="#888"/><circle cx="8" cy="7" r="5.500" fill="#db3f48"/></svg></button>
  <button aria-label="Paint"><svg viewBox="0 0 29 29"><path d="M9 18L25 1" stroke="#d07824" stroke-width="3"/><path d="M9 19l3-3" stroke="#ddd" stroke-width="5"/><path fill="#222" d="M1 25q3-1 4-5l5 3q-2 4-9 2z"/><path fill="#eee" d="M18 6h8l1 18H16z"/><path fill="#3774b8" d="M18 9h8v6h-9z"/><path fill="#ddd" d="M15 24h13v2H15z"/></svg></button>
  <button class="dk-g on" aria-label="Terminal"><svg viewBox="0 0 29 29"><path fill="#e5e5e5" stroke="#888" d="M2 5h25v20H2z"/><path fill="#2b2d2e" d="M4 7h21v16H4z"/><path d="M7 10l3 2.500L7 15M12 16h4" fill="none" stroke="#fff" stroke-width="1.500"/></svg></button>
  <button class="ms-auto" aria-label="Trash"><svg viewBox="0 0 29 29"><path fill="#a8a6a2" stroke="#d9d9d7" d="M5 5h20l-3 22H8z"/><rect x="4" y="2" width="22" height="4" rx="2" fill="#787570" stroke="#ddd"/><path fill="#eee" d="M8 12l4-2 3 2 4-2 3 3-1 12-6 2-6-2z"/><path d="M10 14l4 3 5-3M10 20l5-2 4 3" stroke="#aaa" fill="none"/></svg></button>
</nav>
<script src="https://cdn.jsdelivr.net/npm/bootstrap@5.3.0/dist/js/bootstrap.bundle.min.js"></script>
</body>
</html>
